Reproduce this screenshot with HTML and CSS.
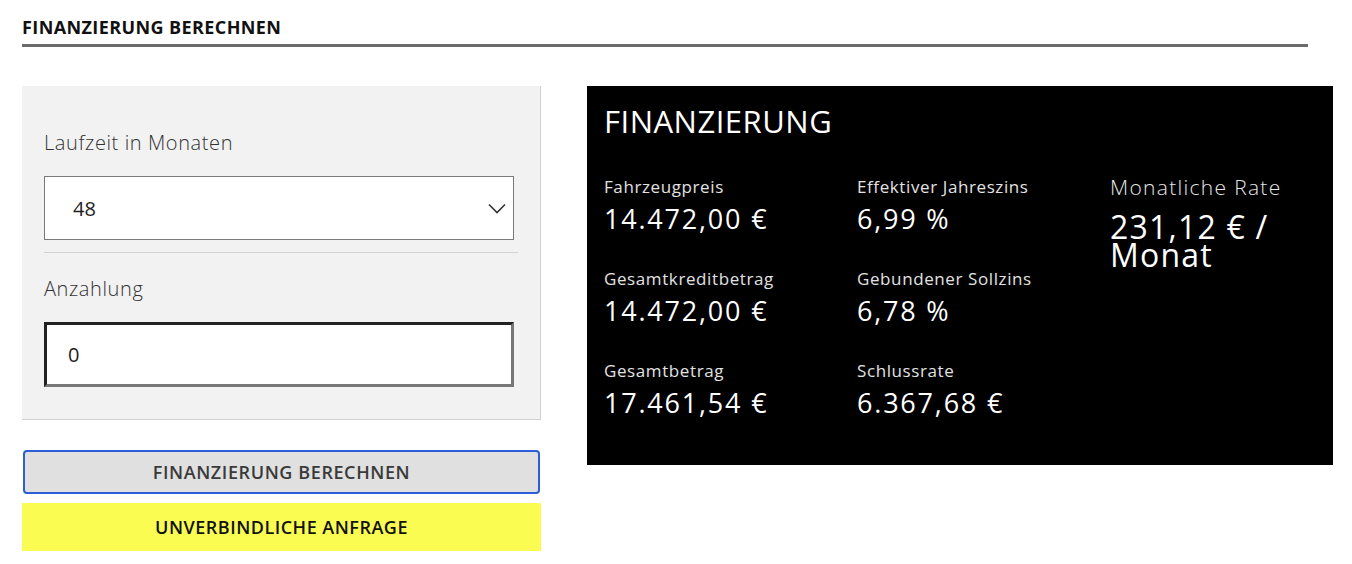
FILE: index.html
```html
<!DOCTYPE html>
<html lang="de">
<head>
<meta charset="utf-8">
<title>Finanzierung berechnen</title>
<link rel="stylesheet" href="styles.css">
</head>
<body>
<div class="page">
  <h2 class="heading">FINANZIERUNG BERECHNEN</h2>
  <div class="content">
    <div class="left">
      <div class="form">
        <label class="label">Laufzeit in Monaten</label>
        <div class="select">
          <span class="select-value">48</span>
          <svg class="chevron" width="18" height="11" viewBox="0 0 18 11"><path d="M1 1.5 L9 9.5 L17 1.5" fill="none" stroke="#333" stroke-width="1.6"/></svg>
        </div>
        <div class="divider"></div>
        <label class="label label-second">Anzahlung</label>
        <div class="input"><span class="input-value">0</span></div>
      </div>
      <button class="btn btn-calc">FINANZIERUNG BERECHNEN</button>
      <button class="btn btn-request">UNVERBINDLICHE ANFRAGE</button>
    </div>
    <div class="result">
      <h3 class="result-title">FINANZIERUNG</h3>
      <div class="grid">
        <div class="item"><div class="item-label">Fahrzeugpreis</div><div class="item-value">14.472,00 €</div></div>
        <div class="item"><div class="item-label">Effektiver Jahreszins</div><div class="item-value">6,99 %</div></div>
        <div class="item rate"><div class="rate-label">Monatliche Rate</div><div class="rate-value">231,12 € /<br>Monat</div></div>
        <div class="item"><div class="item-label">Gesamtkreditbetrag</div><div class="item-value">14.472,00 €</div></div>
        <div class="item"><div class="item-label">Gebundener Sollzins</div><div class="item-value">6,78 %</div></div>
        <div class="item"><div class="item-label">Gesamtbetrag</div><div class="item-value">17.461,54 €</div></div>
        <div class="item"><div class="item-label">Schlussrate</div><div class="item-value">6.367,68 €</div></div>
      </div>
    </div>
  </div>
</div>
</body>
</html>
```

FILE: styles.css
```css
* { box-sizing: border-box; }
body {
  margin: 0;
  background: #fff;
  font-family: "Open Sans", "Noto Sans", "Liberation Sans", sans-serif;
  color: #222;
}
.page {
  padding: 15px 0 0 22px;
}
.heading {
  margin: 0;
  width: 1286px;
  font-size: 18px;
  font-weight: 700;
  letter-spacing: 0.4px;
  line-height: 24px;
  color: #111;
  padding-bottom: 5px;
  border-bottom: 3px solid #6b6b6b;
}
.content {
  display: flex;
  gap: 46px;
  margin-top: 39px;
}
.left {
  width: 519px;
  display: flex;
  flex-direction: column;
}
.form {
  background: #f2f2f2;
  border-right: 1px solid #d2d2d2;
  border-bottom: 1px solid #d2d2d2;
  padding: 45px 26px 33px 22px;
  height: 334px;
}
.label {
  display: block;
  font-size: 20px;
  font-weight: 300;
  letter-spacing: 0.6px;
  line-height: 24px;
  color: #333;
}
.label-second { margin-top: 24px; }
.select {
  margin-top: 21px;
  height: 64px;
  background: #fff;
  border: 1px solid #7a7a7a;
  display: flex;
  align-items: center;
  justify-content: space-between;
  padding: 0 7px 0 28px;
}
.select-value, .input-value {
  font-size: 20px;
  color: #222;
}
.chevron { display: block; }
.divider {
  margin-top: 12px;
  margin-right: -4px;
  height: 1px;
  background: #d2d2d2;
}
.input {
  margin-top: 21px;
  height: 65px;
  background: #fff;
  border: 3px solid;
  border-color: #222 #777 #777 #222;
  display: flex;
  align-items: center;
  padding-left: 21px;
}
.btn {
  font-family: inherit;
  font-size: 18px;
  letter-spacing: 0.5px;
  font-weight: 600;
  cursor: pointer;
  display: block;
}
.btn-calc {
  margin: 30px 1px 0 1px;
  height: 44px;
  background: #e0e0e0;
  border: 2px solid #2b5fd6;
  border-radius: 4px;
  color: #3a3a3a;
  letter-spacing: 0.6px;
}
.btn-request {
  margin-top: 9px;
  height: 48px;
  background: #fafc52;
  border: none;
  color: #111;
}
.result {
  width: 746px;
  height: 379px;
  background: #000;
  color: #fff;
  padding: 15px 17px 0 17px;
}
.result-title {
  margin: 0;
  font-size: 31px;
  font-weight: 400;
  letter-spacing: 0.5px;
  line-height: 40px;
}
.grid {
  margin-top: 35px;
  display: grid;
  grid-template-columns: 253px 253px 1fr;
  row-gap: 32px;
}
.item-label {
  font-size: 17px;
  font-weight: 400;
  letter-spacing: 0.6px;
  line-height: 22px;
  color: #e2e2e2;
}
.item-value {
  margin-top: 4px;
  font-size: 27px;
  letter-spacing: 1.8px;
  line-height: 34px;
}
.rate { grid-row: span 3; }
.rate-label {
  font-size: 21px;
  font-weight: 300;
  letter-spacing: 1.3px;
  line-height: 22px;
  color: #e6e6e6;
}
.rate-value {
  margin-top: 15px;
  font-size: 32px;
  letter-spacing: 1.2px;
  line-height: 28px;
}
```
